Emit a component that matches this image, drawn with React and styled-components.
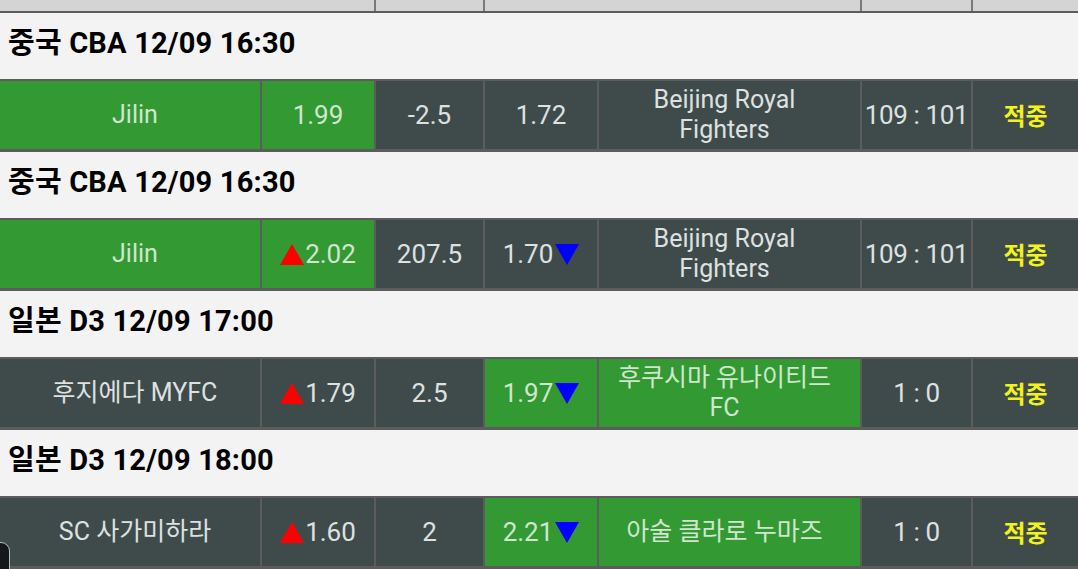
import React from 'react';
import styled, { createGlobalStyle, css } from 'styled-components';

const GlobalStyle = createGlobalStyle`
  html, body {
    margin: 0;
    padding: 0;
    background: #f3f3f3;
    overflow: hidden;
  }
  body {
    font-family: Roboto, "Noto Sans CJK KR", sans-serif;
  }
`;

const COLUMNS = '260px 112px 107px 112px 261px 109px 1fr';

const colors = {
  green: '#339933',
  dark: '#3f4b4a',
  border: '#5c5c5c',
  heading: '#f3f3f3',
  strip: '#d4d4d4',
};

const Page = styled.div`
  width: 1078px;
  height: 569px;
  overflow: hidden;
  position: relative;
  background: ${colors.heading};
`;

const TopStrip = styled.div`
  display: grid;
  grid-template-columns: ${COLUMNS};
  column-gap: 2px;
  height: 11px;
  background: #7a7a7a;
  border-bottom: 2px solid ${colors.border};
`;

const StripCell = styled.div`
  background: ${colors.strip};
  grid-column: span ${({ $span }) => $span || 1};
`;

const Heading = styled.div`
  height: 66px;
  box-sizing: border-box;
  display: flex;
  align-items: center;
  padding: 0 8px 12px;
  background: ${colors.heading};
  color: #000;
  font-family: Roboto, "Noto Sans CJK KR", sans-serif;
  font-weight: 700;
  font-size: 29px;
  letter-spacing: 0.2px;
`;

const Row = styled.div`
  display: grid;
  grid-template-columns: ${COLUMNS};
  column-gap: 2px;
  height: 68px;
  background: ${colors.border};
  border-top: 2px solid ${colors.border};
  border-bottom: 3px solid ${colors.border};
`;

const Cell = styled.div`
  ${({ $green }) => css`
    background: ${$green ? colors.green : colors.dark};
    color: ${$green ? '#d0e6cd' : '#dde1e0'};
  `}
  display: flex;
  align-items: center;
  justify-content: center;
  text-align: center;
  font-size: 26px;
  line-height: 30px;
  white-space: pre-line;
  overflow: hidden;
`;

const Name = styled.span`
  font-size: 25px;
  padding: ${({ $side }) => ($side === 'home' ? '0 0 0 10px' : '0 10px 0 0')};
`;

const Score = styled.span`
  letter-spacing: -0.4px;
  white-space: nowrap;
`;

const Hit = styled.span`
  color: #f2f21c;
  font-family: "Noto Sans CJK KR", sans-serif;
  font-weight: 700;
  font-size: 24px;
`;

const Odds = styled.span`
  display: inline-flex;
  align-items: center;
`;

const Arrow = ({ dir }) =>
  dir === 'up' ? (
    <svg width="24" height="21" viewBox="0 0 24 21" style={{ marginRight: 1 }}>
      <polygon points="12,0 24,21 0,21" fill="#ff0000" />
    </svg>
  ) : (
    <svg width="24" height="21" viewBox="0 0 24 21" style={{ marginLeft: 2 }}>
      <polygon points="0,0 24,0 12,21" fill="#0000ff" />
    </svg>
  );

const Overlay = styled.div`
  position: absolute;
  left: -14px;
  top: 542px;
  width: 22px;
  height: 40px;
  background: #141819;
  border: 1px solid #b8bcbc;
  border-radius: 9px;
`;

const matches = [
  {
    title: '중국 CBA 12/09 16:30',
    home: 'Jilin',
    homeOdds: '1.99',
    line: '-2.5',
    awayOdds: '1.72',
    away: 'Beijing Royal\nFighters',
    score: '109 : 101',
    greens: [0, 1],
  },
  {
    title: '중국 CBA 12/09 16:30',
    home: 'Jilin',
    homeOdds: '2.02',
    homeArrow: true,
    line: '207.5',
    awayOdds: '1.70',
    awayArrow: true,
    away: 'Beijing Royal\nFighters',
    score: '109 : 101',
    greens: [0, 1],
  },
  {
    title: '일본 D3 12/09 17:00',
    home: '후지에다 MYFC',
    homeOdds: '1.79',
    homeArrow: true,
    line: '2.5',
    awayOdds: '1.97',
    awayArrow: true,
    away: '후쿠시마 유나이티드\nFC',
    score: '1 : 0',
    greens: [3, 4],
  },
  {
    title: '일본 D3 12/09 18:00',
    home: 'SC 사가미하라',
    homeOdds: '1.60',
    homeArrow: true,
    line: '2',
    awayOdds: '2.21',
    awayArrow: true,
    away: '아술 클라로 누마즈',
    score: '1 : 0',
    greens: [3, 4],
  },
];

const MatchRow = ({ m }) => {
  const g = (i) => m.greens.includes(i);
  return (
    <Row>
      <Cell $green={g(0)}>
        <Name $side="home">{m.home}</Name>
      </Cell>
      <Cell $green={g(1)}>
        <Odds>
          {m.homeArrow && <Arrow dir="up" />}
          {m.homeOdds}
        </Odds>
      </Cell>
      <Cell $green={g(2)}>{m.line}</Cell>
      <Cell $green={g(3)}>
        <Odds>
          {m.awayOdds}
          {m.awayArrow && <Arrow dir="down" />}
        </Odds>
      </Cell>
      <Cell $green={g(4)}>
        <Name $side="away">{m.away}</Name>
      </Cell>
      <Cell $green={g(5)}>
        <Score>{m.score}</Score>
      </Cell>
      <Cell $green={g(6)}>
        <Hit>적중</Hit>
      </Cell>
    </Row>
  );
};

export default function App() {
  return (
    <Page>
      <GlobalStyle />
      <TopStrip>
        <StripCell $span={2} />
        <StripCell />
        <StripCell $span={2} />
        <StripCell />
        <StripCell />
      </TopStrip>
      {matches.map((m, i) => (
        <React.Fragment key={i}>
          <Heading>{m.title}</Heading>
          <MatchRow m={m} />
        </React.Fragment>
      ))}
      <Overlay />
    </Page>
  );
}
